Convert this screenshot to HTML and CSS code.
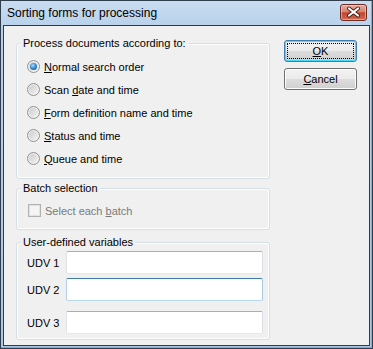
FILE: index.html
```html
<!DOCTYPE html>
<html lang="en">
<head>
  <meta charset="UTF-8" />
  <title>Sorting forms for processing</title>
  <link rel="stylesheet" href="styles.css">
</head>
<body>
  <div class="window">
    <div class="titlebar">
      <span class="title">Sorting forms for processing</span>
      <button class="close" title="Close">
        <svg width="27" height="17" viewBox="0 0 27 17">
          <path d="M9 4.5 L18 11.5 M18 4.5 L9 11.5" stroke="#4a1a14" stroke-width="4" stroke-linecap="round" fill="none"/>
          <path d="M9 4.5 L18 11.5 M18 4.5 L9 11.5" stroke="#ffffff" stroke-width="2.2" stroke-linecap="round" fill="none"/>
        </svg>
      </button>
    </div>

    <div class="client">
      <div class="groups">
        <fieldset class="group group-order">
          <legend>Process documents according to:</legend>
          <label class="option"><span class="radio checked"></span><span><u>N</u>ormal search order</span></label>
          <label class="option"><span class="radio"></span><span>Scan <u>d</u>ate and time</span></label>
          <label class="option"><span class="radio"></span><span><u>F</u>orm definition name and time</span></label>
          <label class="option"><span class="radio"></span><span><u>S</u>tatus and time</span></label>
          <label class="option"><span class="radio"></span><span><u>Q</u>ueue and time</span></label>
        </fieldset>

        <fieldset class="group group-batch">
          <legend>Batch selection</legend>
          <label class="option disabled"><span class="checkbox"></span><span>Select each <u>b</u>atch</span></label>
        </fieldset>

        <fieldset class="group group-udv">
          <legend>User-defined variables</legend>
          <div class="udv-row"><span class="udv-label">UDV 1</span><input class="udv-input" /></div>
          <div class="udv-row udv-row-2"><span class="udv-label">UDV 2</span><input class="udv-input hover" /></div>
          <div class="udv-row udv-row-3"><span class="udv-label">UDV 3</span><input class="udv-input" /></div>
        </fieldset>
      </div>

      <div class="buttons">
        <button class="btn btn-default"><u>O</u>K</button>
        <button class="btn"><u>C</u>ancel</button>
      </div>
    </div>
  </div>
</body>
</html>
```

FILE: styles.css
```css
* {
  box-sizing: border-box;
}

body {
  margin: 0;
  font-family: 'Liberation Sans', Arial, sans-serif;
  font-size: 11px;
  color: #000;
  background: #fff;
}

.window {
  width: 373px;
  height: 349px;
  display: flex;
  flex-direction: column;
  padding: 0 2px 2px 2px;
  border: 1px solid #2f3d4c;
  background: linear-gradient(#c9dcf1, #b6cfea 30px, #a9c6e6);
  box-shadow: inset -1px -1px 0 #62b7e6;
}

.titlebar {
  height: 24px;
  display: flex;
  align-items: flex-start;
  justify-content: space-between;
  padding-left: 4px;
}

.title {
  font-size: 12px;
  line-height: 24px;
  color: #000;
}

.close {
  width: 27px;
  height: 17px;
  margin: 3px 3px 0 0;
  padding: 0;
  border: 1px solid #6b2a22;
  border-radius: 3px;
  background: linear-gradient(#e6ad9f 0%, #d88370 45%, #c2462d 52%, #cf6a4f 100%);
  box-shadow: inset 0 0 0 1px rgba(255, 220, 210, 0.5);
  display: flex;
  align-items: center;
  justify-content: center;
}

.close svg {
  display: block;
  margin: -1px;
}

.client {
  flex: 1;
  display: flex;
  align-items: flex-start;
  gap: 14px;
  padding: 10px 12px 0 12px;
  background-color: #f0f0f0;
  border: 1px solid #3a3a3a;
}

.groups {
  width: 254px;
  display: flex;
  flex-direction: column;
}

.group {
  margin: 0;
  padding: 0;
  min-width: 0;
  border: 1px solid #d5dfe5;
  border-radius: 3px;
  box-shadow: inset 0 0 0 1px #fff;
}

.group legend {
  margin-left: 4px;
  padding: 0 2px;
  line-height: 14px;
  background-color: #f0f0f0;
}

.group-order {
  padding: 5px 0 8px 0;
}

.group-order .option {
  padding-left: 10px;
}

.group-batch {
  margin-top: 2px;
  padding: 4px 0 7px 0;
}

.group-batch .option {
  padding-left: 11px;
}

.group-udv {
  margin-top: 5px;
  padding: 2px 6px 5px 0;
}

.option {
  height: 23px;
  display: flex;
  align-items: center;
  gap: 4px;
}

.option.disabled {
  color: #7a7a7a;
}

.radio {
  position: relative;
  width: 13px;
  height: 13px;
  flex: none;
  border-radius: 50%;
  border: 1px solid #929292;
  background: linear-gradient(135deg, #c8c8c8, #f6f6f6);
  box-shadow: inset 0 0 0 1px #f2f2f2;
}

.radio.checked::after {
  content: '';
  position: absolute;
  left: 2px;
  top: 2px;
  width: 7px;
  height: 7px;
  border-radius: 50%;
  background: radial-gradient(circle at 40% 35%, #a8dcfb 0%, #3c90d6 45%, #0f3f7c 100%);
}

.checkbox {
  width: 13px;
  height: 13px;
  flex: none;
  border: 1px solid #b1b1b1;
  background: #f4f4f4;
  box-shadow: inset 0 0 0 1px #e2e2e2;
}

.udv-row {
  height: 23px;
  display: flex;
  align-items: center;
  padding-left: 10px;
}

.udv-row-2 {
  margin-top: 4px;
}

.udv-row-3 {
  margin-top: 10px;
}

.udv-label {
  width: 39px;
  flex: none;
}

.udv-input {
  width: 197px;
  height: 23px;
  margin: 0;
  padding: 2px 3px;
  font: inherit;
  background: #fff;
  border: 1px solid;
  border-color: #abadb3 #dbdfe6 #e3e9ef #e2e3ea;
  border-radius: 2px;
  outline: none;
}

.udv-input.hover {
  border-color: #3d7bad #a4c9e3 #b7d9ed #b5cfe7;
}

.buttons {
  width: 73px;
  display: flex;
  flex-direction: column;
  gap: 6px;
  padding-top: 4px;
}

.btn {
  width: 73px;
  height: 22px;
  padding: 0;
  font: inherit;
  color: #000;
  border: 1px solid #707070;
  border-radius: 3px;
  background: linear-gradient(#f2f2f2 0%, #ebebeb 50%, #dddddd 51%, #cfcfcf 100%);
  box-shadow: inset 0 0 0 1px #fcfcfc;
}

.btn-default {
  border-color: #3c7fb1;
  box-shadow: inset 0 0 0 1px #48d8fb;
  outline: 1px dotted #000;
  outline-offset: -4px;
}
```
